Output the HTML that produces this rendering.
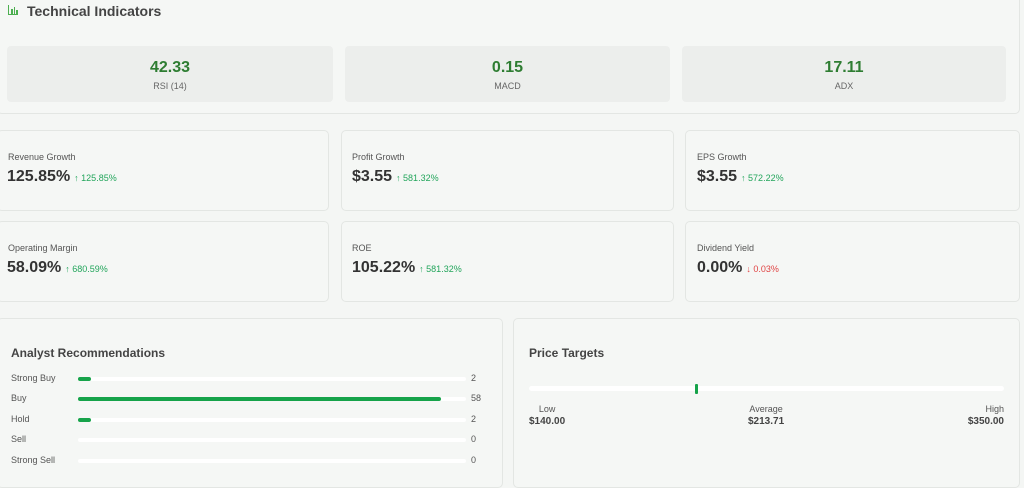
<!DOCTYPE html>
<html><head><meta charset="utf-8"><style>
*{box-sizing:border-box;margin:0;padding:0}
body{width:1024px;height:481px;overflow:hidden;background:#f4f6f4;font-family:"Liberation Sans",sans-serif;position:relative;color:#333}
.card{position:absolute;border:1px solid #e3e6e3;border-radius:5px;background:#f5f7f5}
.ind{position:absolute;top:46px;height:56px;background:#eceeec;border-radius:4px;text-align:center}
.ind b{display:block;margin-top:13px;font-size:16px;color:#2e7d32}
.ind span{display:block;margin-top:4px;font-size:9px;color:#666}
.m .l{position:absolute;left:8px;top:21px;font-size:9px;color:#555}
.m .v{position:absolute;left:7px;top:37px;font-size:16px;font-weight:bold;color:#333}
.m .v i{font-style:normal;font-size:9px;font-weight:normal;color:#22a55b;margin-left:4px}
.m .v i.d{color:#e04444}
.t{position:absolute;font-size:12px;font-weight:bold;color:#444}
.row{position:absolute;left:11px;font-size:9px;color:#555;width:470px;height:12px}
.row .tr{position:absolute;left:67px;top:4px;width:388px;height:4px;background:#fff;border-radius:2px}
.row .f{position:absolute;left:0;top:0;height:4px;background:#16a34a;border-radius:2px}
.row .n{position:absolute;left:460px;top:0}
.pl{position:absolute;font-size:9px;color:#555;text-align:center}
.pl b{display:block;font-size:10px;color:#444;margin-top:2px}
</style></head><body>
<div class="card" style="left:-3px;top:-5px;width:1023px;height:119px"></div>
<div style="position:absolute;left:8px;top:5px;width:10px;height:10px;border-left:1px solid #4caf50;border-bottom:1px solid #4caf50"></div>
<div style="position:absolute;left:11px;top:9px;width:1.5px;height:5px;background:#4caf50"></div>
<div style="position:absolute;left:13.5px;top:7px;width:1.5px;height:7px;background:#4caf50"></div>
<div style="position:absolute;left:16px;top:10px;width:1.5px;height:4px;background:#4caf50"></div>
<div class="t" style="left:27px;top:3px;font-size:14px">Technical Indicators</div>
<div class="ind" style="left:7px;width:326px"><b>42.33</b><span>RSI (14)</span></div>
<div class="ind" style="left:345px;width:325px"><b>0.15</b><span>MACD</span></div>
<div class="ind" style="left:682px;width:324px"><b>17.11</b><span>ADX</span></div>

<div class="card m" style="left:-3px;top:130px;width:332px;height:81px"><div class="l" style="left:10px">Revenue Growth</div><div class="v" style="left:9px">125.85%<i>↑ 125.85%</i></div></div>
<div class="card m" style="left:341px;top:130px;width:333px;height:81px"><div class="l" style="left:10px">Profit Growth</div><div class="v" style="left:10px">$3.55<i>↑ 581.32%</i></div></div>
<div class="card m" style="left:685px;top:130px;width:335px;height:81px"><div class="l" style="left:11px">EPS Growth</div><div class="v" style="left:11px">$3.55<i>↑ 572.22%</i></div></div>
<div class="card m" style="left:-3px;top:221px;width:332px;height:81px"><div class="l" style="left:10px">Operating Margin</div><div class="v" style="left:9px">58.09%<i>↑ 680.59%</i></div></div>
<div class="card m" style="left:341px;top:221px;width:333px;height:81px"><div class="l" style="left:10px">ROE</div><div class="v" style="left:10px">105.22%<i>↑ 581.32%</i></div></div>
<div class="card m" style="left:685px;top:221px;width:335px;height:81px"><div class="l" style="left:11px">Dividend Yield</div><div class="v" style="left:11px">0.00%<i class="d">↓ 0.03%</i></div></div>

<div class="card" style="left:-3px;top:318px;width:506px;height:170px"></div>
<div class="t" style="left:11px;top:346px">Analyst Recommendations</div>
<div class="row" style="top:373px">Strong Buy<div class="tr"><div class="f" style="width:13px"></div></div><div class="n">2</div></div>
<div class="row" style="top:393px">Buy<div class="tr"><div class="f" style="width:363px"></div></div><div class="n">58</div></div>
<div class="row" style="top:414px">Hold<div class="tr"><div class="f" style="width:13px"></div></div><div class="n">2</div></div>
<div class="row" style="top:434px">Sell<div class="tr"></div><div class="n">0</div></div>
<div class="row" style="top:455px">Strong Sell<div class="tr"></div><div class="n">0</div></div>

<div class="card" style="left:513px;top:318px;width:507px;height:170px"></div>
<div class="t" style="left:529px;top:346px">Price Targets</div>
<div style="position:absolute;left:529px;top:386px;width:475px;height:5px;background:#fff;border-radius:3px"></div>
<div style="position:absolute;left:695px;top:384px;width:3px;height:10px;background:#16a34a;border-radius:1px"></div>
<div class="pl" style="left:529px;top:404px">Low<b>$140.00</b></div>
<div class="pl" style="left:748px;top:404px">Average<b>$213.71</b></div>
<div class="pl" style="right:20px;top:404px;text-align:right">High<b>$350.00</b></div>
</body></html>
